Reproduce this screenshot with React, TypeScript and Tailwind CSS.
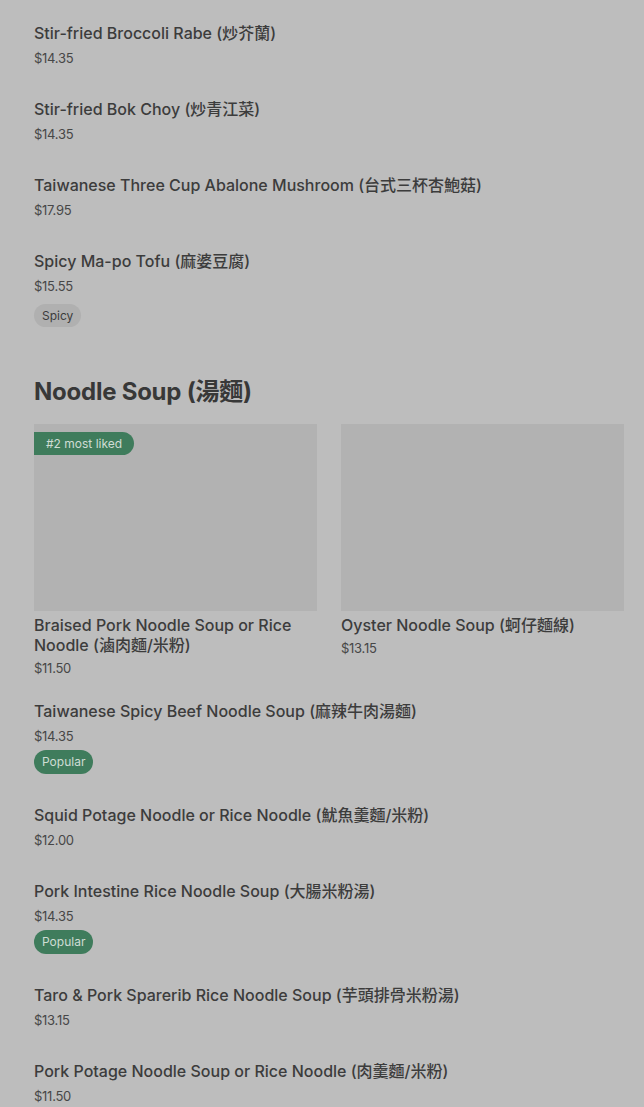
const font = "font-['Inter','Noto_Sans_CJK_TC',sans-serif]";

type Item = { name: string; price: string; tag?: "Spicy" | "Popular" };

const veg: Item[] = [
  { name: "Stir-fried Broccoli Rabe (炒芥蘭)", price: "$14.35" },
  { name: "Stir-fried Bok Choy (炒青江菜)", price: "$14.35" },
  { name: "Taiwanese Three Cup Abalone Mushroom (台式三杯杏鮑菇)", price: "$17.95" },
  { name: "Spicy Ma-po Tofu (麻婆豆腐)", price: "$15.55", tag: "Spicy" },
];

const noodles: Item[] = [
  { name: "Taiwanese Spicy Beef Noodle Soup (麻辣牛肉湯麵)", price: "$14.35", tag: "Popular" },
  { name: "Squid Potage Noodle or Rice Noodle (魷魚羹麵/米粉)", price: "$12.00" },
  { name: "Pork Intestine Rice Noodle Soup (大腸米粉湯)", price: "$14.35", tag: "Popular" },
  { name: "Taro & Pork Sparerib Rice Noodle Soup (芋頭排骨米粉湯)", price: "$13.15" },
  { name: "Pork Potage Noodle Soup or Rice Noodle (肉羹麵/米粉)", price: "$11.50" },
];

function Row({ item }: { item: Item }) {
  return (
    <div className="pt-[15px] pb-[16px]">
      <div className="text-[16px] leading-5 font-medium text-[#3c3c3c]">{item.name}</div>
      <div className="mt-[5px] text-[13px] leading-5 text-[#474747] tracking-[-0.02em]">{item.price}</div>
      {item.tag === "Spicy" && (
        <div className="mt-[8px] flex h-[23px] w-fit items-center rounded-full bg-[#b0b0b0] px-[8px] text-[12px] text-[#3c3c3c]">
          Spicy
        </div>
      )}
      {item.tag === "Popular" && (
        <div className="mt-[4px] flex h-[24px] w-fit items-center rounded-full bg-[#3f7c5c] px-[8px] text-[12px] text-[#cfdcd4]">
          Popular
        </div>
      )}
    </div>
  );
}

function Card({ name, price, badge }: { name: string; price: string; badge?: string }) {
  return (
    <div className="flex flex-col">
      <div className="relative h-[187px] bg-[#b2b2b2]">
        {badge && (
          <div className="absolute left-0 top-[8px] flex h-[23px] items-center rounded-r-full bg-[#3f7c5c] px-[12px] text-[12px] text-[#cfdcd4]">
            {badge}
          </div>
        )}
      </div>
      <div className="mt-[4px] text-[16px] leading-5 font-medium text-[#3c3c3c]">{name}</div>
      <div className="mt-[3px] text-[13px] leading-5 text-[#474747] tracking-[-0.02em]">{price}</div>
    </div>
  );
}

export default function App() {
  return (
    <div className={`${font} min-h-[1107px] w-full overflow-hidden bg-[#bdbdbd] pl-[34px] pr-[20px] pt-[8px]`}>
      {veg.map((i) => (
        <Row key={i.name} item={i} />
      ))}
      <h2 className="mt-[33px] text-[24px] leading-8 font-bold tracking-[-0.01em] text-[#383838]">
        Noodle Soup (湯麵)
      </h2>
      <div className="mt-[16px] grid grid-cols-2 gap-x-[24px]">
        <Card
          name="Braised Pork Noodle Soup or Rice Noodle (滷肉麵/米粉)"
          price="$11.50"
          badge="#2 most liked"
        />
        <Card name="Oyster Noodle Soup (蚵仔麵線)" price="$13.15" />
      </div>
      <div className="mt-[8px]">
        {noodles.map((i) => (
          <Row key={i.name} item={i} />
        ))}
      </div>
    </div>
  );
}
